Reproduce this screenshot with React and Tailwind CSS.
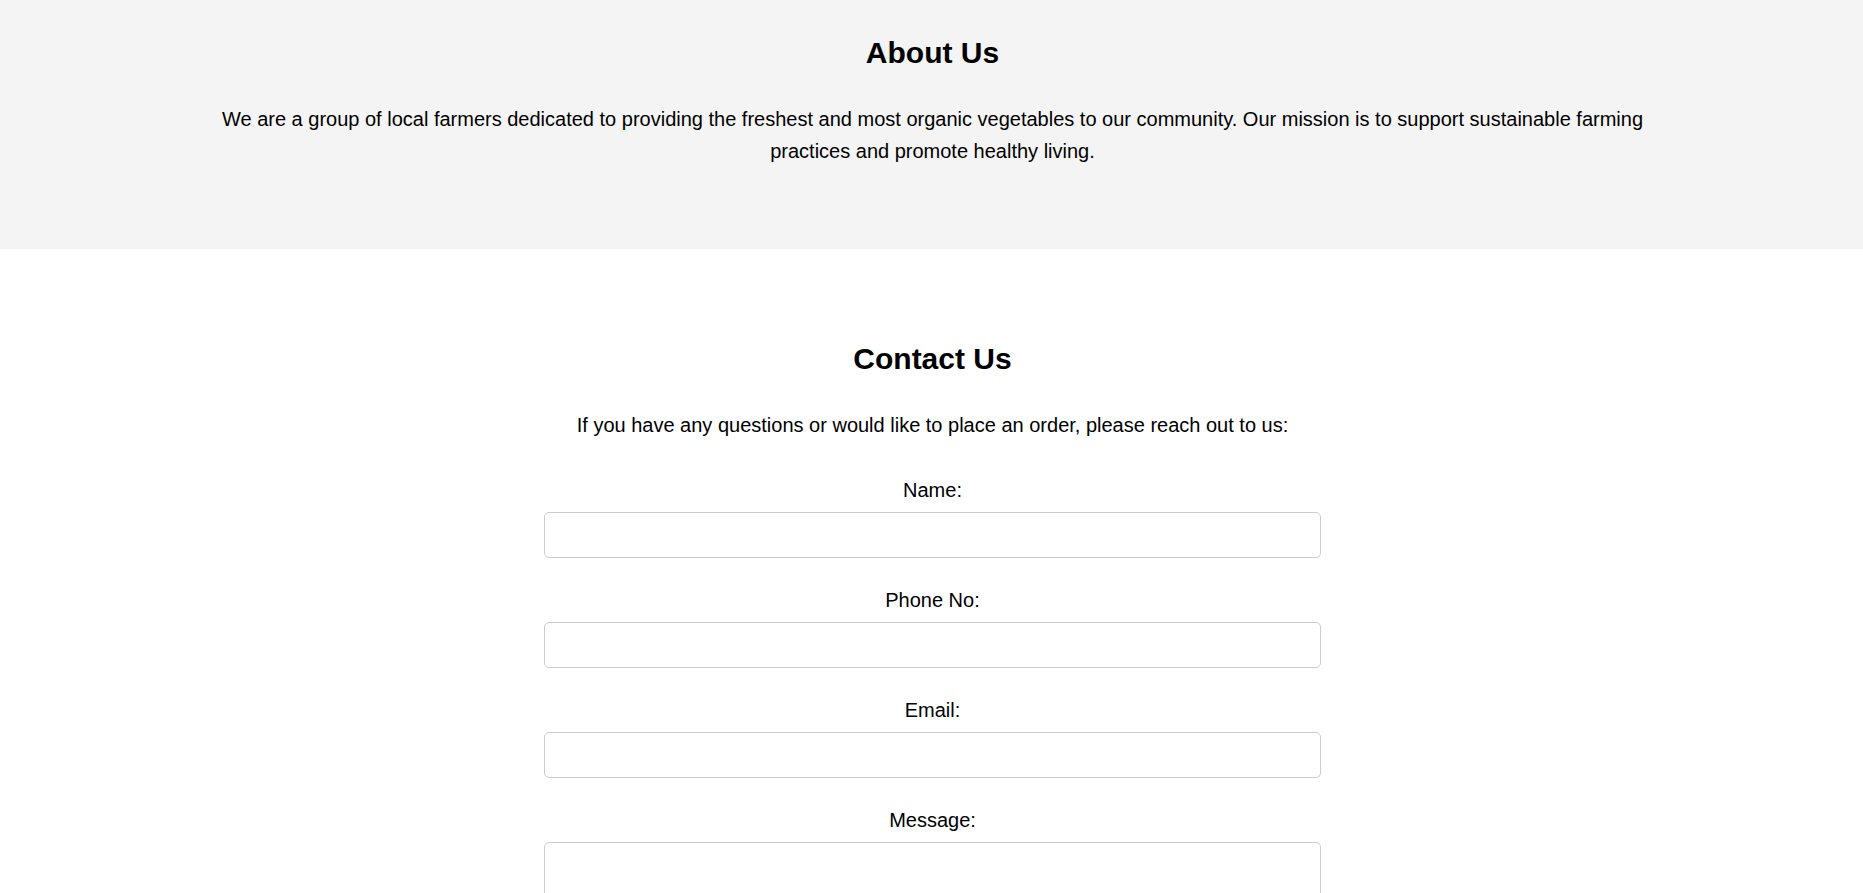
import React from "react";

const fields = [
  { id: "name", label: "Name:", type: "text" },
  { id: "phone", label: "Phone No:", type: "tel" },
  { id: "email", label: "Email:", type: "email" },
];

const App = () => {
  return (
    <div className="min-h-screen bg-white text-black text-[20px] leading-[1.6] font-['Liberation_Sans',Arial,sans-serif] pl-[2px]">
      {/* About */}
      <section className="bg-[#f4f4f4] pt-[29px] pb-[82px] text-center -ml-[2px] pl-[2px]">
        <h2 className="text-[30px] font-bold leading-[48px]">About Us</h2>
        <p className="w-[80%] mx-auto mt-[26px]">
          We are a group of local farmers dedicated to providing the freshest and most organic vegetables to our
          community. Our mission is to support sustainable farming practices and promote healthy living.
        </p>
      </section>

      {/* Contact */}
      <section className="pt-[86px] pb-16 text-center">
        <h2 className="text-[30px] font-bold leading-[48px]">Contact Us</h2>
        <p className="mt-[26px]">If you have any questions or would like to place an order, please reach out to us:</p>

        <form className="w-[777px] mx-auto mt-[31px]" onSubmit={(e) => e.preventDefault()}>
          {fields.map((f) => (
            <div key={f.id} className="mb-6">
              <label htmlFor={f.id} className="block pt-[2px] mb-[6px]">
                {f.label}
              </label>
              <input
                id={f.id}
                type={f.type}
                className="block w-full h-[46px] px-3 border border-[#cccccc] rounded-[5px] bg-white outline-none"
              />
            </div>
          ))}
          <div className="mb-6">
            <label htmlFor="message" className="block pt-[2px] mb-[6px]">
              Message:
            </label>
            <textarea
              id="message"
              rows={5}
              className="block w-full h-[140px] px-3 py-2 border border-[#cccccc] rounded-[5px] bg-white outline-none resize-y"
            />
          </div>
          <button
            type="submit"
            className="px-6 py-2 rounded-[5px] bg-[#4caf50] text-white text-[18px] cursor-pointer"
          >
            Submit
          </button>
        </form>
      </section>
    </div>
  );
};

export default App;
